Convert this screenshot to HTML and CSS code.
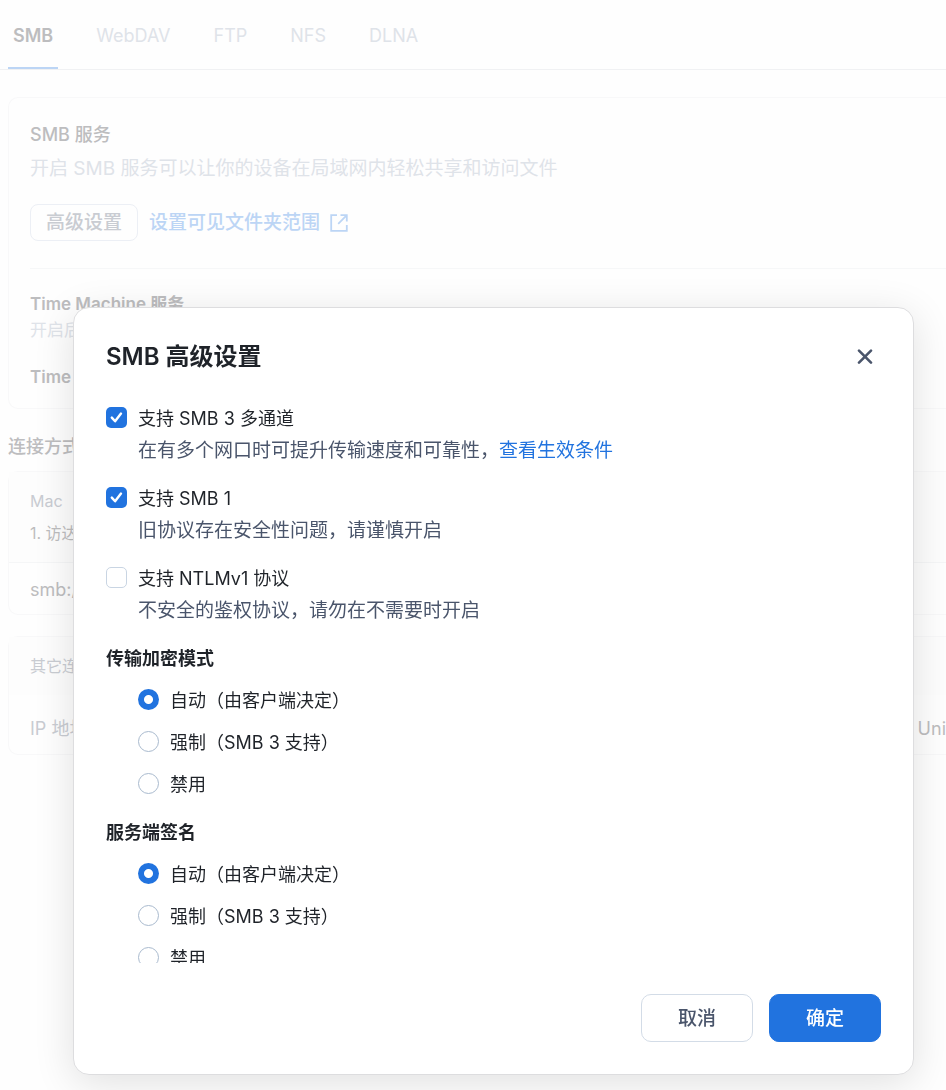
FILE: index.html
```html
<!DOCTYPE html>
<html lang="zh-CN">
<head>
<meta charset="utf-8">
<title>SMB 高级设置</title>
<link rel="stylesheet" href="styles.css">
</head>
<body>
<div class="page">
  <nav class="tabs">
    <a class="tab tab-active" href="#smb">SMB</a>
    <a class="tab" href="#webdav">WebDAV</a>
    <a class="tab" href="#ftp">FTP</a>
    <a class="tab" href="#nfs">NFS</a>
    <a class="tab" href="#dlna">DLNA</a>
  </nav>
  <main class="content">
    <section class="card service">
      <div class="service-main">
        <h2 class="name">SMB 服务</h2>
        <p class="desc">开启 SMB 服务可以让你的设备在局域网内轻松共享和访问文件</p>
        <div class="actions">
          <button class="small-button" type="button">高级设置</button>
          <a class="scope-link" href="#scope">设置可见文件夹范围
            <svg class="open-icon" viewBox="0 0 18 18" fill="none" stroke="currentColor" stroke-width="1.8"><path d="M7 1.2H1.2v15.6h15.6V11M10.5 1.2h6.3v6.3M16.6 1.4L8.2 9.8"/></svg>
          </a>
        </div>
      </div>
      <div class="service-extra">
        <h3 class="extra-title">Time Machine 服务</h3>
        <p class="extra-desc">开启后</p>
        <h3 class="extra-title extra-sub">Time</h3>
      </div>
    </section>
    <h2 class="group-title">连接方式</h2>
    <section class="card">
      <div class="guide">
        <h3 class="guide-title">Mac</h3>
        <p class="guide-step">1. 访达</p>
      </div>
      <div class="address">smb://</div>
    </section>
    <section class="card other">
      <h3 class="other-title">其它连接</h3>
      <div class="other-row"><span>IP 地址</span><span class="other-value">Uni</span></div>
    </section>
  </main>
</div>

<div class="dialog" role="dialog" aria-labelledby="dialog-title">
  <header class="dialog-header">
    <h1 class="dialog-title" id="dialog-title">SMB 高级设置</h1>
    <button class="close" type="button" aria-label="关闭">
      <svg class="close-icon" viewBox="0 0 16 16" fill="none" stroke="currentColor" stroke-width="2.6" stroke-linecap="round"><path d="M2 1.6l12 12M14 1.6l-12 12"/></svg>
    </button>
  </header>
  <form class="dialog-body">
    <div class="option">
      <label class="choice"><input class="box" type="checkbox" checked>支持 SMB 3 多通道</label>
      <p class="hint">在有多个网口时可提升传输速度和可靠性，<a class="hint-link" href="#conditions">查看生效条件</a></p>
    </div>
    <div class="option">
      <label class="choice"><input class="box" type="checkbox" checked>支持 SMB 1</label>
      <p class="hint">旧协议存在安全性问题，请谨慎开启</p>
    </div>
    <div class="option">
      <label class="choice"><input class="box" type="checkbox">支持 NTLMv1 协议</label>
      <p class="hint">不安全的鉴权协议，请勿在不需要时开启</p>
    </div>
    <fieldset class="group">
      <legend class="legend">传输加密模式</legend>
      <div class="radios">
        <label class="choice"><input class="box dot" type="radio" name="encryption" checked>自动（由客户端决定）</label>
        <label class="choice"><input class="box dot" type="radio" name="encryption">强制（SMB 3 支持）</label>
        <label class="choice"><input class="box dot" type="radio" name="encryption">禁用</label>
      </div>
    </fieldset>
    <fieldset class="group">
      <legend class="legend">服务端签名</legend>
      <div class="radios">
        <label class="choice"><input class="box dot" type="radio" name="signing" checked>自动（由客户端决定）</label>
        <label class="choice"><input class="box dot" type="radio" name="signing">强制（SMB 3 支持）</label>
        <label class="choice"><input class="box dot" type="radio" name="signing">禁用</label>
      </div>
    </fieldset>
  </form>
  <footer class="dialog-footer">
    <button class="button" type="button">取消</button>
    <button class="button button-primary" type="button">确定</button>
  </footer>
</div>
</body>
</html>
```

FILE: styles.css
```css
* {
  box-sizing: border-box;
}

body {
  margin: 0;
  background: #fefefe;
  color: #bdbdbf;
  font-family: Inter, "Noto Sans CJK SC", sans-serif;
  font-size: 18px;
  line-height: 32px;
}

h1, h2, h3, p {
  margin: 0;
  font-size: inherit;
  font-weight: inherit;
}

a {
  text-decoration: none;
}

button {
  font: inherit;
}

.page {
  overflow: hidden;
}

/* Protocol tabs */

.tabs {
  display: flex;
  gap: 33px;
  padding-left: 8px;
  border-bottom: 1px solid #f0f1f3;
}

.tab {
  padding: 20px 5px 15px;
  border-bottom: 2px solid transparent;
  color: #dfe3e9;
}

.tab-active {
  border-bottom-color: #bcd5f5;
  color: #bdbdbf;
  font-weight: 600;
}

/* Cards run on past the right edge of the window */

.content {
  padding: 27px 0 0 8px;
}

.card {
  border: 1px solid #f8f8f9;
  border-right: 0;
  border-radius: 10px 0 0 10px;
}

.service {
  padding-left: 21px;
}

.service-main {
  padding: 21px 0 27px;
  border-bottom: 1px solid #f6f7f8;
}

.name {
  font-weight: 500;
}

.desc {
  margin-top: 2px;
  color: #dfe3e9;
  font-size: 19px;
}

.actions {
  display: flex;
  align-items: center;
  gap: 11px;
  margin-top: 19px;
}

.small-button {
  padding: 0 15px;
  border: 1px solid #eceff5;
  border-radius: 8px;
  background: none;
  color: #c9ccd2;
  font-size: 19px;
  font-weight: 500;
  line-height: 35px;
}

.scope-link {
  display: flex;
  align-items: center;
  gap: 10px;
  color: #bcd5f5;
  font-size: 19px;
  font-weight: 500;
}

.open-icon {
  width: 18px;
  height: 18px;
}

.service-extra {
  padding: 22px 0 18px;
}

.extra-title {
  font-size: 17px;
  font-weight: 600;
  line-height: 26px;
}

.extra-desc {
  color: #dfe3e9;
  font-size: 17px;
  line-height: 26px;
}

.extra-sub {
  margin-top: 21px;
}

.group-title {
  padding: 22px 0 8px;
  font-weight: 500;
}

.guide {
  padding: 13px 21px;
  border-bottom: 1px solid #f5f6f7;
  background: #fdfdfd;
  font-size: 16px;
}

.guide-title {
  color: #c9ccd2;
}

.address {
  padding: 11px 21px 8px;
}

.other {
  margin-top: 21px;
  color: #c9ccd2;
}

.other-title {
  padding: 13px 21px;
  background: #fdfdfd;
  font-size: 16px;
}

.other-row {
  display: flex;
  justify-content: space-between;
  padding: 18px 0 9px 21px;
}

.other-value {
  color: #bdbdbf;
}

/* Dialog */

.dialog {
  position: fixed;
  inset: 307px 32px 15px 73px;
  display: flex;
  flex-direction: column;
  border: 1px solid #dddddf;
  border-radius: 16px;
  background: #fff;
  box-shadow: 0 8px 40px rgba(0, 0, 0, 0.12);
  color: #1f2329;
}

.dialog-header {
  display: flex;
  align-items: center;
  justify-content: space-between;
  padding: 33px 32px 30px;
}

.dialog-title {
  font-size: 24px;
  font-weight: 600;
}

.close {
  display: flex;
  padding: 8px;
  border: 0;
  background: none;
  color: #4a556b;
}

.close-icon {
  width: 16px;
  height: 16px;
}

.dialog-body {
  display: flex;
  flex: 1;
  flex-direction: column;
  gap: 16px;
  min-height: 0;
  padding: 0 32px;
  overflow: hidden;
}

.option,
.group {
  flex-shrink: 0;
}

.choice {
  display: flex;
  align-items: flex-start;
  gap: 11px;
}

.box {
  flex: none;
  width: 21px;
  height: 21px;
  margin: 4px 0 0;
  border: 1px solid #c9d5e3;
  border-radius: 5px;
  background: #fff center / 100% no-repeat;
  appearance: none;
}

.box:checked {
  border: 0;
  background-color: #2173df;
  background-image: url("data:image/svg+xml,%3Csvg xmlns='http://www.w3.org/2000/svg' viewBox='0 0 21 21' fill='none' stroke='white' stroke-width='2.4' stroke-linecap='round' stroke-linejoin='round'%3E%3Cpath d='M5.8 10.6l3.3 3.7L15 6.6'/%3E%3C/svg%3E");
}

.dot {
  border-color: #a9bace;
  border-radius: 50%;
}

.dot:checked {
  background-image: radial-gradient(circle, #fff 4px, transparent 5px);
}

.hint {
  padding-left: 32px;
  color: #4a556b;
  font-size: 19px;
}

.hint-link {
  color: #2173df;
}

.group {
  min-width: 0;
  margin: 0;
  padding: 0;
  border: 0;
}

.legend {
  padding: 0;
  font-weight: 600;
}

.radios {
  display: flex;
  flex-direction: column;
  gap: 10px;
  padding: 10px 0 0 32px;
}

.dialog-footer {
  display: flex;
  justify-content: flex-end;
  gap: 16px;
  padding: 31px 32px 32px;
}

.button {
  padding: 8px 36px 6px;
  border: 1px solid #d3dce7;
  border-radius: 10px;
  background: #fff;
  color: #4a556b;
  font-size: 19px;
  font-weight: 500;
}

.button-primary {
  border-color: #2173df;
  background: #2173df;
  color: #fff;
}
```
